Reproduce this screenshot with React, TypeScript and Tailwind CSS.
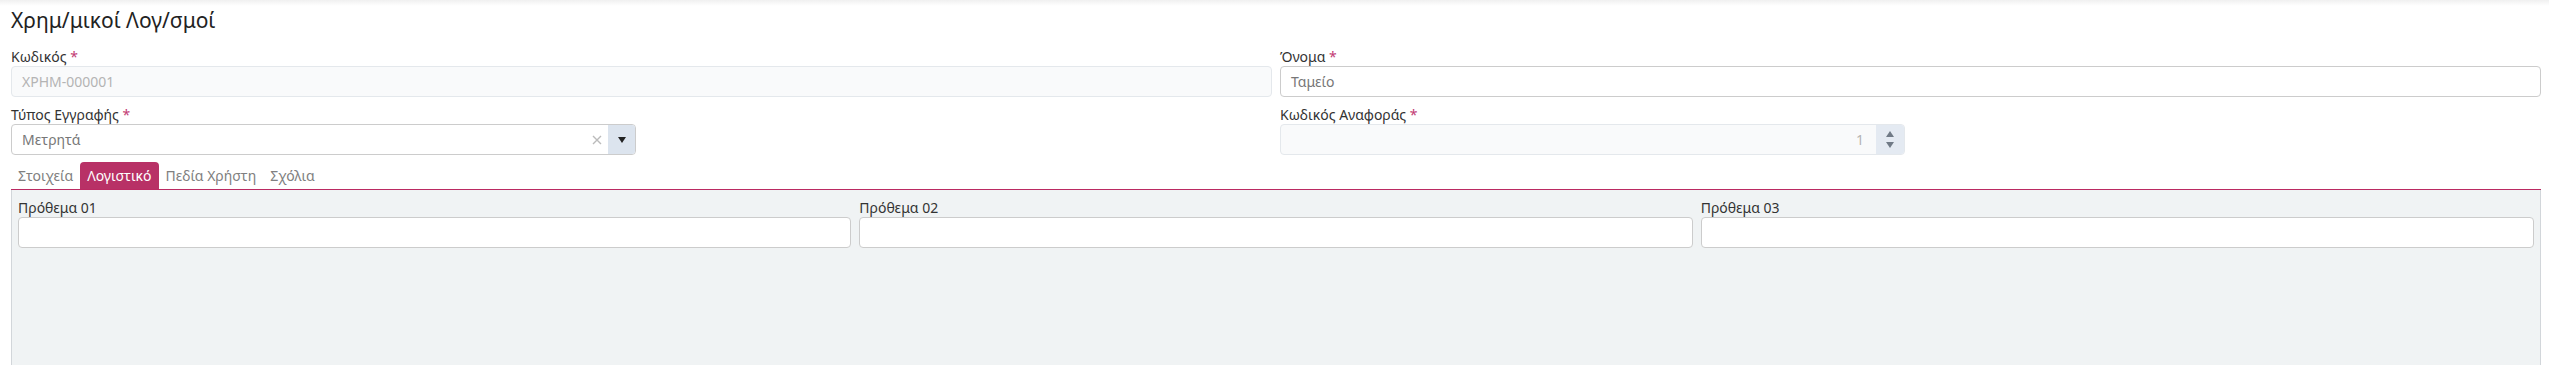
import React from "react";

const Req = () => <span className="text-[#c23b73]"> *</span>;

const Label = ({ children, required }: { children: React.ReactNode; required?: boolean }) => (
  <div className="h-[17px] text-[14px] leading-[16px] text-[#333]">
    {children}
    {required && <Req />}
  </div>
);

const Caret = ({ up }: { up?: boolean }) => (
  <svg width="8" height="6" viewBox="0 0 8 6" className={up ? "" : "rotate-180"}>
    <path d="M4 0 L8 6 L0 6 Z" fill="currentColor" />
  </svg>
);

const tabs = ["Στοιχεία", "Λογιστικό", "Πεδία Χρήστη", "Σχόλια"];

export default function App() {
  return (
    <div className="min-h-[366px] bg-white font-['Noto_Sans',sans-serif]">
      <div className="h-[6px] bg-linear-to-b from-[#f0f0f0] to-white" />
      <div className="pl-[11px] pr-[8px]">
        <h1 className="mt-[1px] text-[21px] leading-[26px] text-[#222]">Χρημ/μικοί Λογ/σμοί</h1>

        <div className="mt-[16px] grid grid-cols-2 gap-x-[8px]">
          <div>
            <Label required>Κωδικός</Label>
            <div className="flex h-[31px] items-center rounded-[4px] border border-[#e4e8ec] bg-[#f9fafb] px-[10px] text-[14px] text-[#b4b4b4]">
              XPHM-000001
            </div>
          </div>
          <div>
            <Label required>Όνομα</Label>
            <div className="flex h-[31px] items-center rounded-[4px] border border-[#ccc] bg-white px-[10px] text-[14px] text-[#777]">
              Ταμείο
            </div>
          </div>

          <div className="mt-[10px]">
            <Label required>Τύπος Εγγραφής</Label>
            <div className="flex h-[31px] w-[625px] items-stretch rounded-[4px] border border-[#ccc] bg-white">
              <div className="flex flex-1 items-center px-[10px] text-[14px] text-[#777]">Μετρητά</div>
              <div className="flex w-[22px] items-center justify-center text-[#bbb]">
                <svg width="10" height="10" viewBox="0 0 10 10">
                  <path d="M1 1 L9 9 M9 1 L1 9" stroke="currentColor" strokeWidth="1.4" />
                </svg>
              </div>
              <div className="flex w-[27px] items-center justify-center rounded-r-[3px] bg-[#dce4ee] text-[#222]">
                <Caret />
              </div>
            </div>
          </div>
          <div className="mt-[10px]">
            <Label required>Κωδικός Αναφοράς</Label>
            <div className="flex h-[31px] w-[625px] items-stretch rounded-[4px] border border-[#e4e8ec] bg-[#f9fafb]">
              <div className="flex flex-1 items-center justify-end px-[12px] text-[14px] text-[#b4b4b4]">1</div>
              <div className="flex w-[28px] flex-col items-center justify-center gap-[5px] rounded-r-[3px] bg-[#e4eaf2] text-[#707a86]">
                <Caret up />
                <Caret />
              </div>
            </div>
          </div>
        </div>

        <div className="mt-[7px] flex h-[28px] items-stretch border-b border-[#bb2a62]">
          {tabs.map((t) => (
            <div
              key={t}
              className={
                t === "Λογιστικό"
                  ? "flex items-center rounded-t-[4px] bg-[#b83166] px-[7px] text-[14px] text-white"
                  : "flex items-center px-[7px] text-[14px] text-[#808080]"
              }
            >
              {t}
            </div>
          ))}
        </div>

        <div className="grid h-[175px] grid-cols-3 content-start gap-x-[8px] border-x border-[#d2d6da] bg-[#f0f3f4] px-[6px] pt-[10px]">
          {["Πρόθεμα 01", "Πρόθεμα 02", "Πρόθεμα 03"].map((l) => (
            <div key={l}>
              <Label>{l}</Label>
              <div className="h-[31px] rounded-[4px] border border-[#ccc] bg-white" />
            </div>
          ))}
        </div>
      </div>
    </div>
  );
}
